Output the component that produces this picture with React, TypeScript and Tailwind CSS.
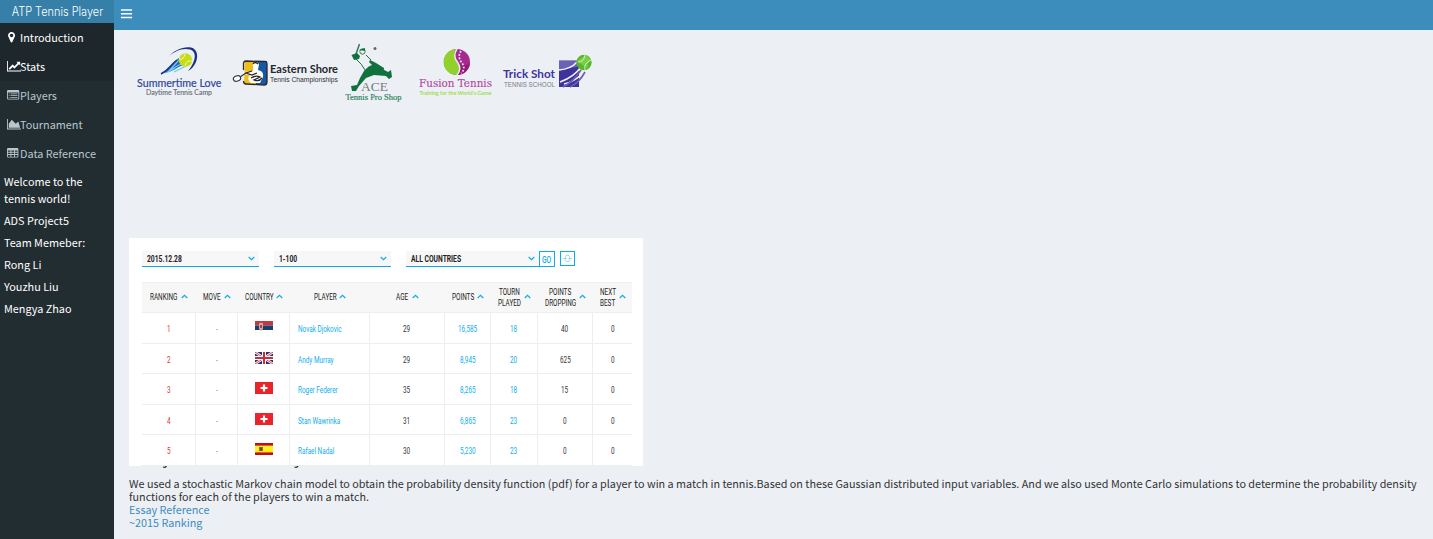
import React from "react";

const CJK = "font-['Noto_Sans_CJK_SC',sans-serif]";

function SummertimeLogo() {
  return (
    <svg className="block overflow-visible" width="96" height="65" viewBox="129 40 96 65">
      <path d="M168 57C174 50 184 46 191 47.500C201 50 198 66 188 71C195 63 198 52 190 49.500C183 47.500 174 51 168 57Z" fill="#1d3185" />
      <path d="M161 73C168 71 171 63 179 58L183 65C177 67 172 73 161 73Z" fill="#1f63b5" />
      <path d="M165 73C172 71 174 67 181 64M168 72L179 60M174 72L186 66" stroke="#6fc9ee" strokeWidth="1.300" fill="none" />
      <path d="M161 74C169 70 170 65 177 60" stroke="#1d3185" strokeWidth="1.500" fill="none" />
      <circle cx="185.500" cy="60" r="6.700" fill="#c8dc1c" />
      <path d="M179 59Q184 60 185 54M185 66Q186 60 192 61" stroke="#eff6c0" strokeWidth="1" fill="none" />
      <text x="137" y="86.500" textLength="84.500" lengthAdjust="spacingAndGlyphs" fontSize="12" stroke="#31479a" strokeWidth=".2" fill="#31479a" className="font-['Lato',sans-serif]">Summertime Love</text>
      <text x="146" y="95" textLength="66" lengthAdjust="spacingAndGlyphs" fontSize="6.800" stroke="#68707a" strokeWidth=".15" fill="#68707a" className="font-['Lato',sans-serif]">Daytime Tennis Camp</text>
    </svg>
  );
}

function EasternLogo() {
  return (
    <svg className="block overflow-visible" width="115" height="65" viewBox="225 40 115 65">
      <path d="M245 61H256V84H244Z" fill="#efbd16" />
      <path d="M256 61H267V85L256 84Z" fill="#1559a5" />
      <path d="M243.500 70V63Q244 61 246 61L264 61.500Q267 61 267 64V82Q267 85 264 85L246 84Q243.500 84 243.500 81" fill="none" stroke="#29292b" strokeWidth="1.300" />
      <path d="M253 64Q256 60 259 64L258 70Q264 71 263 77L260 83H251Q246 79 250 75L243 74V72L253 71Z" fill="#fff" />
      <path d="M252 71L246 73L252 75L257 73M251 78Q256 75 260 77L254 80Q259 82 262 78M253 64Q255 61 258 64" stroke="#252525" strokeWidth="1.300" fill="none" />
      <path d="M240 77L246 73" stroke="#333" strokeWidth="1.200" />
      <ellipse cx="237" cy="78.500" rx="3.700" ry="2.700" fill="#fff" stroke="#333" strokeWidth="1.200" transform="rotate(-20 237 78.500)" />
      <text x="270" y="73.300" textLength="68" lengthAdjust="spacingAndGlyphs" fontSize="10.500" fontWeight="700" fill="#25272a" className="font-['Lato',sans-serif]">Eastern Shore</text>
      <text x="270" y="81.500" textLength="68" lengthAdjust="spacingAndGlyphs" fontSize="6.600" fill="#303234" className="font-['Liberation_Sans',sans-serif]">Tennis Championships</text>
    </svg>
  );
}

function AceLogo() {
  return (
    <svg className="block overflow-visible" width="70" height="65" viewBox="340 40 70 65">
      <path d="M356 54L359.500 44" stroke="#27804f" strokeWidth="1.500" />
      <path d="M364 71Q372 62 377 66L388 72L391 70L392 77L389 79L386 76L374 75L366 78L359 86L356 91L352 91L351 86L357 85L360 78Z" fill="#11713c" />
      <path d="M370 60L376 63L384 68L384 70L374 67L369 62Z" fill="#11713c" />
      <path d="M351.500 55L357 53L360 56L359 59L354 60Z" fill="#11713c" />
      <path d="M356 59Q362 64 365 70M366 55L371 60" fill="none" stroke="#11713c" strokeWidth="1" />
      <circle cx="362.500" cy="51.500" r="2.700" fill="#e9eeea" stroke="#397f57" />
      <path d="M359 50L365 48V51Z" fill="#13713b" />
      <circle cx="375" cy="48.500" r="1.500" fill="#62656c" />
      <text x="361" y="91" textLength="27" lengthAdjust="spacingAndGlyphs" fontSize="13" fill="#777c80" className="font-['Liberation_Serif',serif]">ACE</text>
      <text x="345.500" y="99.500" textLength="56" lengthAdjust="spacingAndGlyphs" fontSize="7.500" stroke="#318663" strokeWidth=".2" fill="#318663" className="font-['Liberation_Serif',serif]">Tennis Pro Shop</text>
    </svg>
  );
}

function FusionLogo() {
  return (
    <svg className="block overflow-visible" width="88" height="65" viewBox="410 40 88 65">
      <circle cx="457" cy="62" r="13" fill="#a62a8e" />
      <path d="M456 49A13 13 0 0 0 457 75Q463 69 457 62Q452 54 456 49Z" fill="#92d12b" />
      <path d="M456 61Q466 69 470 62A13 13 0 0 1 457 75Q463 69 456 61Z" fill="#951a7b" />
      <path d="M457 49Q452 56 458 63Q462 69 457 75" stroke="#f1e7f1" strokeWidth="1.500" fill="none" />
      <path d="M461 51Q457 57 462 63Q466 69 461 73" stroke="#f1e7f1" strokeWidth="1.700" strokeDasharray="1.800 1.600" fill="none" />
      <text x="419" y="87" textLength="73" lengthAdjust="spacingAndGlyphs" fontSize="11" fill="#b348a2" stroke="#b348a2" strokeWidth=".15" className="font-['DejaVu_Serif',serif]">Fusion Tennis</text>
      <text x="419.500" y="95" textLength="72" lengthAdjust="spacingAndGlyphs" fontSize="5.800" fontWeight="700" fill="#a2dc54" className="font-['Lato',sans-serif]">Training for the World's Game</text>
    </svg>
  );
}

function TrickLogo() {
  return (
    <svg className="block overflow-visible" width="98" height="65" viewBox="498 40 98 65">
      <path d="M559 60.500H579V87H559Z" fill="#40329a" />
      <path d="M559 61H577V67L559 69Z" fill="#6a63b5" />
      <path d="M559 70Q571 69 577 62M560 82Q574 77 581 67M564 84Q575 82 585 71" stroke="#f2f2fa" strokeWidth="1.500" fill="none" />
      <path d="M563 87Q573 82 581 70M570 87Q579 83 585 72" stroke="#685fb1" strokeWidth="1.600" fill="none" />
      <circle cx="584" cy="62.500" r="7.700" fill="#58b62d" />
      <path d="M577 61Q584 56 586 55L591 60Q586 64 588 69" fill="#7bce46" />
      <path d="M578 62Q584 62 585 55M585 70Q583 64 591 60" stroke="#d9efc9" strokeWidth=".9" fill="none" />
      <text x="503" y="78" textLength="52" lengthAdjust="spacingAndGlyphs" fontSize="11" fontWeight="700" fill="#4134a0" className="font-['Lato',sans-serif]">Trick Shot</text>
      <text x="504" y="87" textLength="51" lengthAdjust="spacingAndGlyphs" fontSize="6.800" fill="#777b83" className="font-['Liberation_Sans',sans-serif]">TENNIS SCHOOL</text>
    </svg>
  );
}

const MARKER = "M1152 640q0-106-75-181t-181-75-181 75-75 181 75 181 181 75 181-75 75-181zm256 0q0 109-33 179l-364 774q-16 33-47.5 52t-67.5 19-67.5-19-46.5-52l-365-774q-33-70-33-179 0-212 150-362t362-150 362 150 150 362z";
const LINE = "M2048 1536v128h-2048v-1536h128v1408h1920zm-128-1248v435q0 21-19.5 29.5t-35.5-7.5l-121-121-633 633q-10 10-23 10t-23-10l-233-233-416 416-192-192 585-585q10-10 23-10t23 10l233 233 464-464-121-121q-16-16-7.500-35.500t29.500-19.500h435q14 0 23 9t9 23z";
const AREA = "M2048 1536v128h-2048v-1536h128v1408h1920zm-384-1024l256 896h-1664v-576l448-576 576 576z";
const LIST = "M160 128H1632Q1792 128 1792 288V1376Q1792 1536 1632 1536H160Q0 1536 0 1376V288Q0 128 160 128ZM128 512V1376Q128 1408 160 1408H1632Q1664 1408 1664 1376V512ZM256 640H384V768H256ZM512 640H1536V768H512ZM256 896H384V1024H256ZM512 896H1536V1024H512ZM256 1152H384V1280H256ZM512 1152H1536V1280H512Z";
const TABLE = "M160 128H1504Q1664 128 1664 288V1376Q1664 1536 1504 1536H160Q0 1536 0 1376V288Q0 128 160 128ZM128 512V704H512V512ZM640 512V704H1024V512ZM1152 512V704H1536V512ZM128 832V1024H512V832ZM640 832V1024H1024V832ZM1152 832V1024H1536V832ZM128 1152V1376Q128 1408 160 1408H512V1152ZM640 1152V1408H1024V1152ZM1152 1152V1408H1504Q1536 1408 1536 1376V1152Z";

const nav = [
  { label: "Introduction", d: MARKER, box: "230 0 2048 1792", cls: "text-white bg-[#1e282c]" },
  { label: "Stats", d: LINE, box: "0 0 2048 1792", cls: "text-white bg-[#1e282c]" },
  { label: "Players", d: LIST, box: "0 0 2048 1792", cls: "text-[#b8c7ce]" },
  { label: "Tournament", d: AREA, box: "0 0 2048 1792", cls: "text-[#b8c7ce]" },
  { label: "Data Reference", d: TABLE, box: "0 0 2048 1792", cls: "text-[#b8c7ce]" },
];

function Sidebar() {
  return (
    <aside className="w-[114px] h-[539px] shrink-0 bg-[#222d32] overflow-hidden">
      <div className="h-[23px] bg-[#367fa9] text-white flex items-center justify-center whitespace-nowrap font-['Inter','Liberation_Sans',sans-serif] font-light text-[12.8px] leading-[23px]">
        <span className="inline-block scale-x-[0.855]">ATP Tennis Player</span>
      </div>
      <nav>
        {nav.map((n) => (
          <a key={n.label} className={`flex items-center h-[29px] pl-[7px] text-[10.85px] whitespace-nowrap ${n.cls}`}>
            <svg className="shrink-0 -mr-[1px]" width="14" height="12.25" viewBox={n.box} fill="currentColor" preserveAspectRatio="xMinYMid meet"><path fillRule="evenodd" d={n.d} /></svg>
            <span>{n.label}</span>
          </a>
        ))}
      </nav>
      <div className="pl-1 pt-[5px] text-white text-[10.85px] leading-[17px] flex flex-col gap-[5px]">
        <p>Welcome to the<br />tennis world!</p>
        <p>ADS Project5</p>
        <p>Team Memeber:</p>
        <p>Rong Li</p>
        <p>Youzhu Liu</p>
        <p>Mengya Zhao</p>
      </div>
    </aside>
  );
}

function Chevron({ up = false }: { up?: boolean }) {
  return (
    <svg className="shrink-0" width="7" height="5" viewBox="0 0 7 5" fill="none" stroke="#0cacec" strokeWidth="1.200">
      <path d={up ? "M.7 4L3.500 1.300L6.300 4" : "M.7 1L3.500 3.700L6.300 1"} />
    </svg>
  );
}

function Flag({ code }: { code: string }) {
  return (
    <svg className="block" width="18" height="12" viewBox="0 0 18 12">
      {code === "rs" && <><path fill="#fff" stroke="#ddd" strokeWidth=".4" d="M0 0H18V12H0Z" /><path fill="#c7363d" d="M0 0H18V4.500H0Z" /><path fill="#173f75" d="M0 4.500H18V9H0Z" /><path fill="#cbaaa0" d="M4 2.500L6 1.500L8 2.500V8L6 10L4 8Z" /><path fill="#b63b42" d="M5 4H7V7H5Z" /></>}
      {code === "gb" && <><path fill="#263370" d="M0 0H18V12H0Z" /><path stroke="#fff" strokeWidth="2.400" d="M0 0L18 12M18 0L0 12" /><path stroke="#d12c3d" strokeWidth=".9" d="M0 0L18 12M18 0L0 12" /><path stroke="#fff" strokeWidth="4" d="M9 0V12M0 6H18" /><path stroke="#d12c3d" strokeWidth="2" d="M9 0V12M0 6H18" /></>}
      {code === "ch" && <><path fill="#e9252b" d="M0 0H18V12H0Z" /><path stroke="#fff" strokeWidth="2.200" d="M9 2.500V9.500M5.500 6H12.500" /></>}
      {code === "es" && <><path fill="#c60b1e" d="M0 0H18V12H0Z" /><path fill="#fff01f" d="M0 2.600H18V9.400H0Z" /><path fill="#a66a28" d="M4 4H8V8H4Z" /><path fill="#60432d" d="M5 4.500H7V7.500H5Z" /></>}
    </svg>
  );
}

const grid = "grid grid-cols-[54px_42px_52px_80px_75px_46px_47px_55px_39px]";
const heads = ["RANKING", "MOVE", "COUNTRY", "PLAYER", "AGE", "POINTS", "TOURN|PLAYED", "POINTS|DROPPING", "NEXT|BEST"];
const rows = [
  ["1", "-", "rs", "Novak Djokovic", "29", "16,585", "18", "40", "0"],
  ["2", "-", "gb", "Andy Murray", "29", "8,945", "20", "625", "0"],
  ["3", "-", "ch", "Roger Federer", "35", "8,265", "18", "15", "0"],
  ["4", "-", "ch", "Stan Wawrinka", "31", "6,865", "23", "0", "0"],
  ["5", "-", "es", "Rafael Nadal", "30", "5,230", "23", "0", "0"],
];

function T({ text, size = 9, k = 0.75, weight = 400 }: { text: string; size?: number; k?: number; weight?: number }) {
  const est = React.useRef<SVGTextElement>(null);
  const [w, setW] = React.useState(0);
  React.useLayoutEffect(() => {
    if (est.current) setW(est.current.getComputedTextLength() * k);
  }, [text, k]);
  return (
    <svg className="block shrink-0 overflow-visible" width={w} height="11">
      <g transform={`scale(${k} 1)`}><text ref={est} y="8.800" fontSize={size} fontWeight={weight} fill="currentColor">{text}</text></g>
    </svg>
  );
}

function Select({ label, cls }: { label: string; cls: string }) {
  return (
    <div className={`h-4 bg-[#f7f7f7] border-b border-[#0ca6e3] flex items-center justify-between pl-[5px] pr-1 text-[#222] ${cls}`}>
      <T text={label} weight={700} /><Chevron />
    </div>
  );
}

function Rankings() {
  return (
    <section className="w-[514px] h-[228px] bg-white pl-[13px] pt-[13px] overflow-hidden font-['Roboto',sans-serif]">
      <div className="flex h-4">
        <Select label="2015.12.28" cls="w-[117px]" />
        <Select label="1-100" cls="w-[117px] ml-[15px]" />
        <Select label="ALL COUNTRIES" cls="w-[133px] ml-[15px]" />
        <div className="w-4 h-4 border border-[#0caceb] text-[#0caceb] flex items-center justify-center"><T text="GO" weight={500} /></div>
        <div className="w-[15px] h-[15px] ml-[5px] border border-[#0caceb] flex items-center justify-center">
          <svg width="9" height="9" viewBox="0 0 9 9" stroke="#62c9f1" fill="none" strokeWidth=".7"><path d="M1.800 3A3 3 0 0 1 7.200 3M1.800 6A3 3 0 0 0 7.200 6M0 4.500H3.500M5.500 4.500H9M2.500 3.500V5.500M6.500 3.500V5.500" /></svg>
        </div>
      </div>
      <div className="w-[490px] mt-[15px]">
        <div className={`${grid} h-[31px] bg-[#f7f7f7] border-y border-[#eee] text-[#222] pb-[2px]`}>
          {heads.map((h) => (
            <div key={h} className="flex items-center justify-center gap-[3px]">
              <div className="flex flex-col items-center">{h.split("|").map((p) => <T key={p} text={p} k={0.71} />)}</div>
              <Chevron up />
            </div>
          ))}
        </div>
        {rows.map((r) => (
          <div key={r[0]} className={`${grid} h-[30.5px] border-b border-[#eee]`}>
            {r.map((c, i) => (
              <div key={i} className={`flex items-center pt-[2px] ${i < 8 ? "border-r border-[#eee]" : ""} ${i === 3 ? "pl-2" : "justify-center"} ${i === 0 ? "text-[#db3038]" : i === 1 ? "text-[#888]" : i === 3 || i === 5 || i === 6 ? "text-[#10aeea]" : "text-[#333]"}`}>
                {i === 2 ? <div className="-mt-[3px]"><Flag code={c} /></div> : <T text={c} k={0.71} />}
              </div>
            ))}
          </div>
        ))}
      </div>
    </section>
  );
}

export default function App() {
  return (
    <div className={`flex h-[539px] overflow-hidden bg-[#ecf0f5] ${CJK}`}>
      <Sidebar />
      <div className="flex-1 min-w-0">
        <header className="h-[30px] bg-[#3c8dbc] pl-[6px] flex items-center text-white">
          <svg width="13" height="13" viewBox="0 0 1792 1792" fill="currentColor" className="-mt-[3px]"><path d="M1664 1344v192h-1536v-192zm0-512v192h-1536v-192zm0-512v192h-1536v-192z" /></svg>
        </header>
        <main className="pl-[15px]">
          <div className="flex h-[208px] pt-[10px] items-start">
            <SummertimeLogo /><EasternLogo /><AceLogo /><FusionLogo /><TrickLogo />
          </div>
          <Rankings />
          <svg className="block" width="180" height="11" viewBox="0 0 180 11"><path d="M34 1Q36 2 37.500 0M165.500 1Q167.500 2 169 0" stroke="#333" strokeWidth="1.300" fill="none" /></svg>
          <div className="text-[10.8px] leading-[13px] text-[#333] whitespace-nowrap">
            <p>We used a stochastic Markov chain model to obtain the probability density function (pdf) for a player to win a match in tennis.Based on these Gaussian distributed input variables. And we also used Monte Carlo simulations to determine the probability density<br />functions for each of the players to win a match.</p>
            <a className="block text-[#3c8dbc]">Essay Reference</a>
            <a className="block text-[#3c8dbc]">~2015 Ranking</a>
          </div>
        </main>
      </div>
    </div>
  );
}
